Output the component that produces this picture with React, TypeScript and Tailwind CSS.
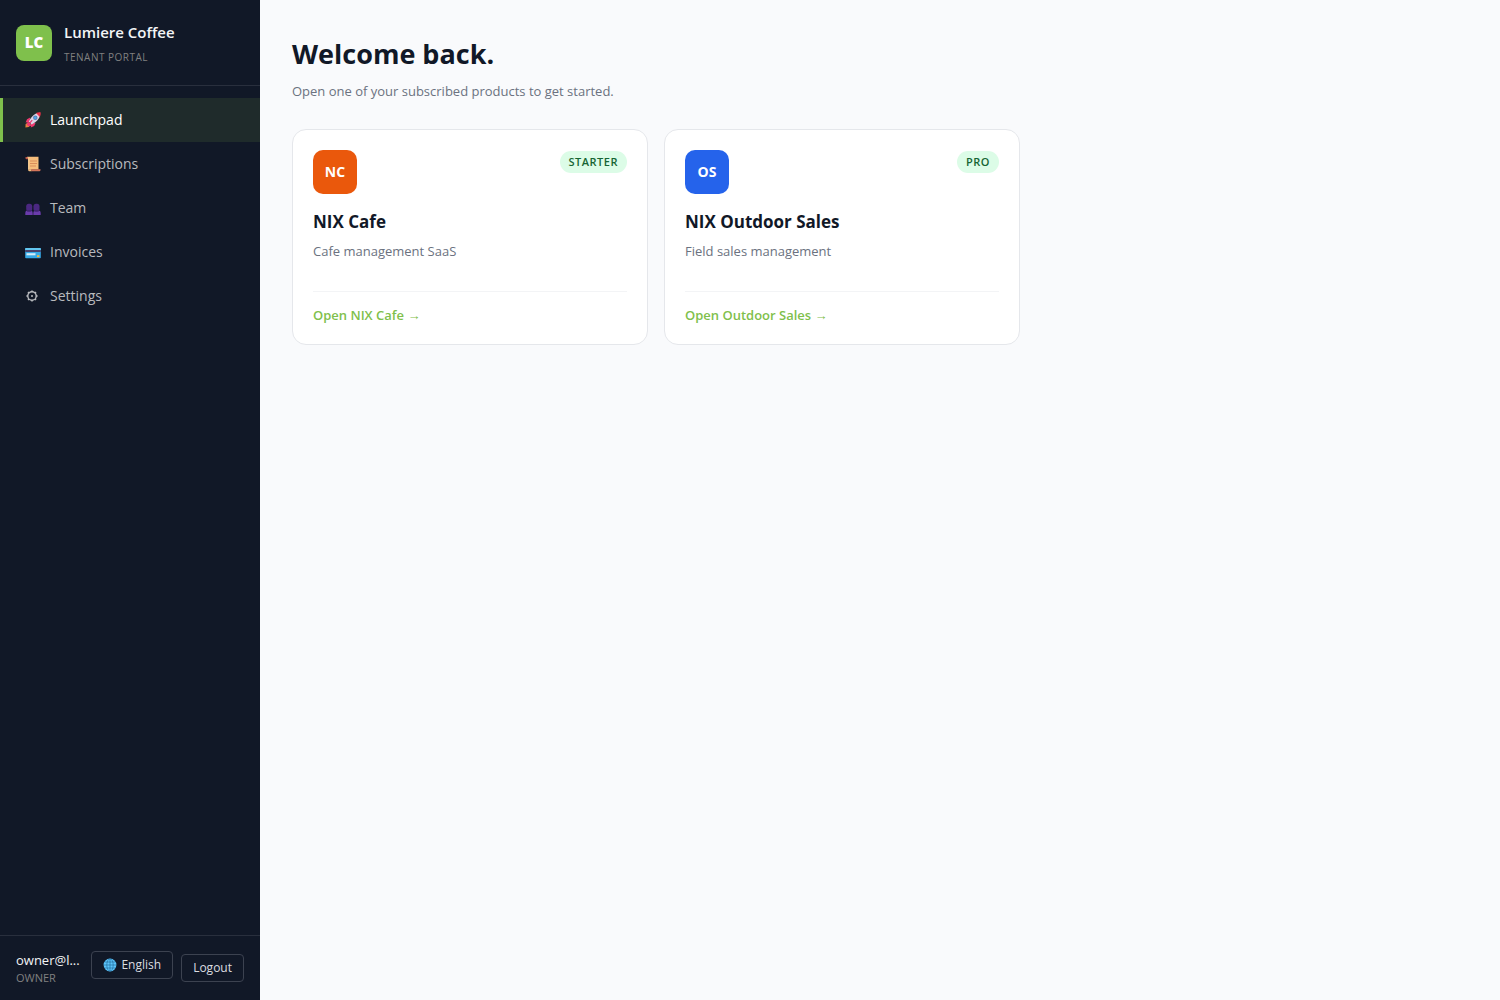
import type { ReactNode } from 'react'

function RocketIcon() {
  return (
    <svg viewBox="0 0 16 16" className="size-4" aria-hidden="true">
      <path d="M3.6 10.2 0.6 12l-.2 3.6 3.4-.6 2-2.8z" fill="#e8843c" />
      <path d="M5.2 5.6 2 7.2.6 10.6l3.8-.6zM10.6 10.8 9.2 14l-3.4 1.6.4-4z" fill="#f0386f" />
      <path d="M2.8 9.6 1.6 12.4l2 2 3-1z" fill="#f0386f" />
      <path d="M14.8.8C10.6.8 6.6 3.6 3.8 9.6l2.8 2.8c6-2.8 8.8-7 8.4-11.2z" fill="#dcd3e4" />
      <path d="M15.6.3c-1.6-.2-3.2.1-4.6.8l3.8 3.9c.8-1.4 1.1-3 .8-4.7z" fill="#ee3048" />
      <circle cx="10.3" cy="5.7" r="2.2" fill="#5f7fb0" />
      <circle cx="10.3" cy="5.7" r="1.3" fill="#4aa8f0" />
      <path d="M7.2 8.2 4 12" stroke="#f0386f" strokeWidth="1.2" />
    </svg>
  )
}

function ScrollIcon() {
  return (
    <svg viewBox="0 0 16 16" className="size-4" aria-hidden="true">
      <path d="M.5 1h3v2.2h-2A1 1 0 0 1 .5 2.2z" fill="#b9574a" />
      <path d="M2 .8h11.5v12.7H3.2V2.4z" fill="#f6bd7c" />
      <path d="M3.2 2.4v11.1h1V1z" fill="#fbd29c" />
      <path d="M5 5h7M5 7.5h7M5 10h6" stroke="#d98d5b" />
      <path d="M3.2 13.2h3.3v2H4.4a1.2 1.2 0 0 1-1.2-1.2z" fill="#f6bd7c" />
      <path d="M6.3 13.2h9.2v.8a1.2 1.2 0 0 1-1.2 1.2H6.3z" fill="#d4745a" />
    </svg>
  )
}

function PeopleIcon() {
  return (
    <svg viewBox="0 0 16 16" className="mt-0.5 size-4" aria-hidden="true">
      <path d="M.3 14v-2.2a2.3 2.3 0 0 1 2.3-2.3h2.8a2.3 2.3 0 0 1 2.3 2.3V14z" fill="#6a3bab" />
      <path d="M8.3 14v-2.2a2.3 2.3 0 0 1 2.3-2.3h2.8a2.3 2.3 0 0 1 2.3 2.3V14z" fill="#6a3bab" />
      <rect x="1.2" y="2.8" width="6" height="7.7" rx="2.5" fill="#4b2881" />
      <rect x="8.5" y="2.8" width="6" height="7.7" rx="2.5" fill="#4b2881" />
      <path d="M2 10h4.4M9.3 10h4.4" stroke="#2b1c55" strokeWidth=".7" />
    </svg>
  )
}

function CardIcon() {
  return (
    <svg viewBox="0 0 16 16" className="mt-px size-4" aria-hidden="true">
      <rect x=".2" y="3" width="15.6" height="10.3" rx=".8" fill="#35a9e6" />
      <path d="M.2 3.8A.8.8 0 0 1 1 3h14a.8.8 0 0 1 .8.8V5H.2z" fill="#63c6ef" />
      <path d="M.2 5h15.6v2H.2z" fill="#49426b" />
      <path d="M1.5 8.2h9v2.1h-9z" fill="#d5edf8" />
      <path d="M12 10.2h2.4v1.9H12z" fill="#f6b73c" />
    </svg>
  )
}

function GearIcon() {
  return (
    <svg
      viewBox="0 0 16 16"
      className="mr-[3px] size-4"
      fill="none"
      stroke="currentColor"
      aria-hidden="true"
    >
      <circle cx="8" cy="8" r="4.2" strokeWidth="1.4" />
      <circle cx="8" cy="8" r="1" fill="currentColor" stroke="none" />
      <path
        d="M8 4V2.4M8 12v1.6M4 8H2.4M12 8h1.6M5 5 4 4M11 5l1-1M5 11l-1 1M11 11l1 1"
        strokeWidth="1.5"
      />
    </svg>
  )
}

function GlobeIcon() {
  return (
    <svg viewBox="0 0 14 14" className="size-3.5" fill="none" aria-hidden="true">
      <circle cx="7" cy="7" r="6.4" fill="#5cc4fa" />
      <path
        d="M.8 7h12.4M7 .8v12.4M1.8 4h10.4M1.8 10h10.4"
        stroke="#1d6496"
        strokeWidth=".6"
      />
      <ellipse cx="7" cy="7" rx="3.2" ry="6.2" stroke="#1d6496" strokeWidth=".6" />
    </svg>
  )
}

type NavItem = {
  label: string
  href: string
  icon: ReactNode
  active?: boolean
}

const navItems: NavItem[] = [
  { label: 'Launchpad', href: '#launchpad', icon: <RocketIcon />, active: true },
  { label: 'Subscriptions', href: '#subscriptions', icon: <ScrollIcon /> },
  { label: 'Team', href: '#team', icon: <PeopleIcon /> },
  { label: 'Invoices', href: '#invoices', icon: <CardIcon /> },
  { label: 'Settings', href: '#settings', icon: <GearIcon /> },
]

const products = [
  {
    code: 'NC',
    name: 'NIX Cafe',
    description: 'Cafe management SaaS',
    plan: 'STARTER',
    cta: 'Open NIX Cafe',
    color: 'bg-[#ea580c]',
    href: '#nix-cafe',
  },
  {
    code: 'OS',
    name: 'NIX Outdoor Sales',
    description: 'Field sales management',
    plan: 'PRO',
    cta: 'Open Outdoor Sales',
    color: 'bg-[#2563eb]',
    href: '#outdoor-sales',
  },
]

function Sidebar() {
  return (
    <aside className="sticky top-0 flex h-screen w-65 shrink-0 flex-col bg-[#111827]">
      <div className="flex items-center gap-3 border-b border-white/10 px-4 py-5">
        <div className="flex size-9 items-center justify-center rounded-lg bg-[#7fc04c] text-[15px] font-extrabold text-white">
          LC
        </div>
        <div className="min-w-0">
          <div className="truncate text-[15px] font-semibold leading-[25px] text-[#f3f4f6]">
            Lumiere Coffee
          </div>
          <div className="mt-1 text-[10px] leading-4 tracking-[0.5px] text-[#808080]">
            TENANT PORTAL
          </div>
        </div>
      </div>

      <nav className="flex-1 py-3" aria-label="Main">
        {navItems.map((item) => (
          <a
            key={item.label}
            href={item.href}
            aria-current={item.active ? 'page' : undefined}
            className={`flex h-11 items-center gap-[7px] border-l-[3px] pl-5 text-sm ${
              item.active
                ? 'border-[#7fc04c] bg-[#1f2b2b] font-medium text-white'
                : 'border-transparent text-[#b8babe]'
            }`}
          >
            <span className="flex w-5 justify-center">{item.icon}</span>
            {item.label}
          </a>
        ))}
      </nav>

      <div className="flex items-center gap-2 border-t border-white/10 px-4 py-3.5">
        <div className="min-w-0 flex-1">
          <div className="whitespace-nowrap text-[13px] leading-5 text-[#f3f4f6]">owner@l...</div>
          <div className="text-[11px] leading-4 text-[#808080]">OWNER</div>
        </div>
        <div className="pb-1.5">
          <button
            type="button"
            className="flex h-7 items-center gap-1 rounded border border-[#3c4250] px-[11px] text-xs text-[#dcdde0]"
          >
            <GlobeIcon />
            English
          </button>
        </div>
        <button
          type="button"
          className="h-7 rounded border border-[#3c4250] px-[11px] text-xs text-[#dcdde0]"
        >
          Logout
        </button>
      </div>
    </aside>
  )
}

export default function App() {
  return (
    <div className="flex min-h-screen bg-[#f9fafc] font-['Open_Sans','Noto_Sans',sans-serif]">
      <Sidebar />

      <main className="min-w-0 flex-1 p-8">
        <h1 className="mt-1 text-[27px] font-bold leading-9 text-[#111827]">Welcome back.</h1>
        <p className="mt-[7px] text-[13px] leading-6 text-[#6b7280]">
          Open one of your subscribed products to get started.
        </p>

        <div className="mt-[26px] grid max-w-[1100px] grid-cols-[repeat(auto-fill,minmax(280px,1fr))] gap-4">
          {products.map((product) => (
            <article
              key={product.code}
              className="rounded-[14px] border border-[#e5e7eb] bg-white p-5"
            >
              <div className="flex items-start justify-between">
                <div
                  className={`flex size-11 items-center justify-center rounded-[10px] text-sm font-bold text-white ${product.color}`}
                >
                  {product.code}
                </div>
                <span className="mt-px rounded-full bg-[#dcfce7] px-[9px] text-[11px] font-semibold leading-[22px] tracking-[0.5px] text-[#166534]">
                  {product.plan}
                </span>
              </div>
              <h2 className="mt-4 text-[17px] font-bold leading-6 text-[#111827]">
                {product.name}
              </h2>
              <p className="mt-1.5 min-h-[37px] text-[13px] leading-[22px] text-[#6b7280]">
                {product.description}
              </p>
              <div className="mt-3.5 border-t border-[#f3f4f6] pt-3.5">
                <a
                  href={product.href}
                  className="block text-[13px] font-semibold leading-[18px] text-[#7fc04c]"
                >
                  {product.cta} →
                </a>
              </div>
            </article>
          ))}
        </div>
      </main>
    </div>
  )
}
